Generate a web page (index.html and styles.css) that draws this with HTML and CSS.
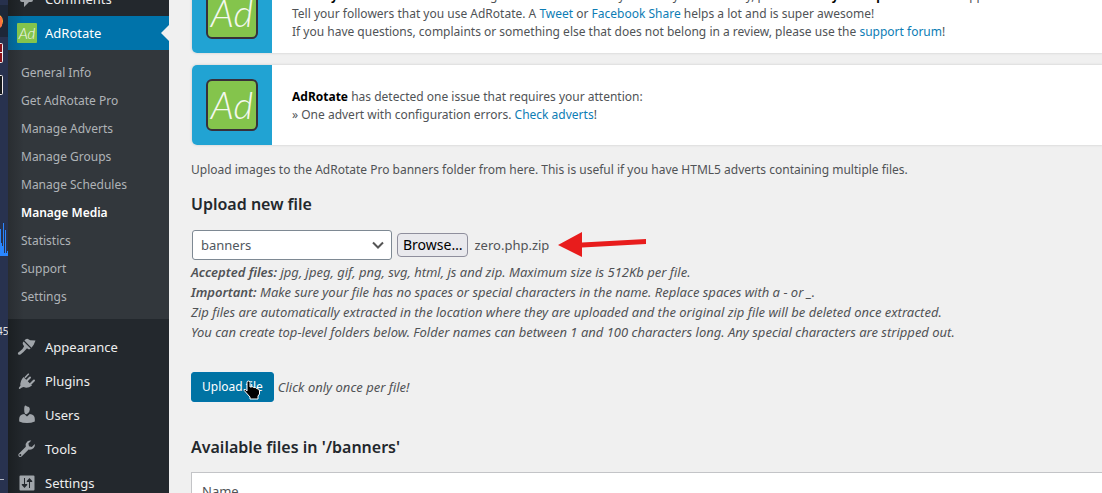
FILE: index.html
```html
<!DOCTYPE html>
<html lang="en">
<head>
<meta charset="utf-8">
<title>Manage Media</title>
<link rel="stylesheet" href="styles.css">
</head>
<body>
<div class="screen">
  <aside class="desktop" aria-hidden="true">
    <svg width="8" height="493" viewBox="0 0 8 493">
      <rect width="8" height="5" fill="#27314d"/>
      <rect y="5" width="8" height="32" fill="#1d2738"/>
      <circle cx="-4" cy="21" r="7" fill="#ffae35"/>
      <path d="M2 17v9l-2 2V17z" fill="#ff713d"/>
      <rect x="-12" y="43.500" width="14.500" height="19" rx="1" fill="#8c1118" stroke="#f4eeee"/>
      <path d="M0 52.500h2" stroke="#fff"/>
      <rect x="-12" y="75.500" width="14.500" height="19" rx="1" fill="#15181b" stroke="#f4eeee"/>
      <path d="M0 256v-27h1v14h1v3h1v-23h1v30h1v-23h1v23h1v-2h1v5z" fill="#2a86ff"/>
      <text x="-3" y="335" class="clock">45</text>
      <path d="M0 479.500h4" stroke="#b5b9c4"/>
    </svg>
  </aside>

  <nav class="menu">
    <a class="item" href="#">
      <svg class="icon" viewBox="0 0 20 20"><path d="M5 2h9q2 0 2 2v7q0 2-2 2h-2l-5 5v-5H5q-2 0-2-2V4q0-2 2-2z"/></svg>
      <span>Comments</span>
    </a>
    <a class="item current" href="#">
      <svg class="icon" viewBox="0 0 20 20"><rect width="20" height="20" rx="1" class="green"/><text x="10" y="16" class="logo-text">Ad</text></svg>
      <span>AdRotate</span>
    </a>
    <div class="submenu">
      <a href="#">General Info</a>
      <a href="#">Get AdRotate Pro</a>
      <a href="#">Manage Adverts</a>
      <a href="#">Manage Groups</a>
      <a href="#">Manage Schedules</a>
      <a href="#" class="active">Manage Media</a>
      <a href="#">Statistics</a>
      <a href="#">Support</a>
      <a href="#">Settings</a>
    </div>
    <div class="group">
      <a class="item" href="#">
        <svg class="icon" viewBox="0 0 20 20"><path d="M14.500 10.800 7.400 3.600Q9 1.300 11 2l2.200 1.200 5.300.3-1.800 4.300zM6.600 4.500l7 7q-1.500 1.500-2.600.4l-1-.7Q6.800 15 3.500 17.500 1.200 18.500.8 16.600q0-1.200 1.800-2.200Q6 12.400 7.100 9.200L6 7.500Q5 6 6.600 4.500z"/></svg>
        <span>Appearance</span>
      </a>
      <a class="item" href="#">
        <svg class="icon" viewBox="0 0 20 20"><path d="M13 6.500 9.500 10M17 9.500 13.500 13" class="line"/><path d="M12.100 3.500 8.500 7.200l-1.200-1L11 2.500q1.500-.5 1.100 1zM6.500 5.900 15 14.400q-4.500 3.500-8.200 1.700l-1.800.5-2.300 1.500q-1.200-.2-.8-1.300l1.600-2.200q-.8-4.300 3-8.700z"/></svg>
        <span>Plugins</span>
      </a>
      <a class="item" href="#">
        <svg class="icon" viewBox="0 0 20 20"><path d="M10 1.500q2.800 0 2.800 3T10 9 7.200 4.500t2.800-3zM7.200 9 10 11.500 12.800 9q5 .5 5 5v2.500q-3.500 1.500-7.800 1.500t-7.800-1.500V14q0-4.500 5-5z"/></svg>
        <span>Users</span>
      </a>
      <a class="item" href="#">
        <svg class="icon" viewBox="0 0 20 20"><path fill-rule="evenodd" d="M16.700 9.100q-2.100 2.100-5.100 1.500l-7 6.900q-1.400 1-2.700-.1-1.300-1.300-.1-2.700l7-6.900Q7.900 4.800 10.300 2.600q1.600-1.400 4-1.100L11.400 4.600l.6 2.700 2.800.7 3-3q.6 2.400-1.100 4.100zM3.300 17a1 1 0 1 0 0-2 1 1 0 0 0 0 2z"/></svg>
        <span>Tools</span>
      </a>
      <a class="item" href="#">
        <svg class="icon" viewBox="0 0 20 20"><path fill-rule="evenodd" d="M3.500 2.500h13q1 0 1 1v13q0 1-1 1h-13q-1 0-1-1v-13q0-1 1-1zM7 5v6H4.800v1L7.500 15l2.700-3v-1H8V5zM12 15V9H9.800V8l2.700-3 2.700 3v1H13v6z"/></svg>
        <span>Settings</span>
      </a>
    </div>
  </nav>

  <main class="content">
    <section class="notice">
      <div class="brand"><svg class="badge" viewBox="0 0 52 52"><rect x="1" y="1" width="50" height="50" rx="5" class="badge-box"/><text x="26" y="40" class="logo-text big">Ad</text></svg></div>
      <p><b>Already</b> a fan of AdRotate and using it to show adverts to your many visitors daily, please share <b>your experience</b> and support it!<br>
      Tell your followers that you use AdRotate. A <a href="#">Tweet</a> or <a href="#">Facebook Share</a> helps a lot and is super awesome!<br>
      If you have questions, complaints or something else that does not belong in a review, please use the <a href="#">support forum</a>!</p>
    </section>
    <section class="notice">
      <div class="brand"><svg class="badge" viewBox="0 0 52 52"><rect x="1" y="1" width="50" height="50" rx="5" class="badge-box"/><text x="26" y="40" class="logo-text big">Ad</text></svg></div>
      <p><b>AdRotate</b> has detected one issue that requires your attention:<br>
      » One advert with configuration errors. <a href="#">Check adverts</a>!</p>
    </section>

    <p class="intro">Upload images to the AdRotate Pro banners folder from here. This is useful if you have HTML5 adverts containing multiple files.</p>

    <h2>Upload new file</h2>
    <form class="upload">
      <div class="row">
        <span class="picker">
          <select aria-label="Folder"><option>banners</option></select>
          <svg class="chevron" width="12" height="8" viewBox="0 0 12 8"><path d="m1 1.500 5 5 5-5"/></svg>
        </span>
        <button type="button" class="browse">Browse…</button>
        <span class="filename">zero.php.zip</span>
        <svg class="arrow" width="90" height="26" viewBox="0 0 90 26"><path d="M0 13 24 0v10.500L88 7v5L24 15.500V25z"/></svg>
      </div>
      <p class="help"><b>Accepted files:</b> jpg, jpeg, gif, png, svg, html, js and zip. Maximum size is 512Kb per file.<br>
      <b>Important:</b> Make sure your file has no spaces or special characters in the name. Replace spaces with a - or _.<br>
      Zip files are automatically extracted in the location where they are uploaded and the original zip file will be deleted once extracted.<br>
      You can create top-level folders below. Folder names can between 1 and 100 characters long. Any special characters are stripped out.</p>
      <div class="submit">
        <button type="button" class="primary">Upload file</button>
        <svg class="pointer" width="18" height="20" viewBox="0 0 18 20"><path d="M4 2.500Q4 1 5.500 1T7 2.500V7q3-.8 4 .5 2-.2 2.500 1 3 0 3 2.500v3l-1.500 2v3H7v-2l-4.500-5Q.5 10 1 9.500q1-1 3 1.500z"/></svg>
        <em>Click only once per file!</em>
      </div>
    </form>

    <h2>Available files in '/banners'</h2>
    <table class="files"><thead><tr><th scope="col">Name</th></tr></thead></table>
  </main>
</div>
</body>
</html>
```
FILE: styles.css
```css
* { box-sizing: border-box; }

body {
  margin: 0;
  background: #f0f0f0;
  color: #505356;
  font: 12px/18px "Noto Sans", "Open Sans", sans-serif;
}

a { color: #0d7db5; text-decoration: none; }
p, h2 { margin: 0; }

.screen {
  display: grid;
  grid-template-columns: 8px 161px 1fr;
  height: 100vh;
  overflow: hidden;
}

.desktop { background: #28324f; overflow: hidden; }
.desktop svg { display: block; }
.clock { fill: #e4e4e8; font: 10px "Noto Sans", sans-serif; }

/* Admin menu */
.menu {
  background: linear-gradient(90deg, #1b1f22, #23282d 16px);
  margin-top: -18px;
}
.item {
  display: flex;
  align-items: center;
  gap: 8px;
  height: 34px;
  padding-left: 9px;
  color: #eee;
  font-size: 13px;
}
.icon { width: 20px; height: 20px; fill: #a0a5aa; flex: none; }
.line { stroke: #a0a5aa; stroke-width: 2; stroke-linecap: round; }
.item.current {
  position: relative;
  background: linear-gradient(90deg, #04628f, #0073aa 16px);
  color: #fff;
}
.item.current::after {
  content: "";
  position: absolute;
  right: 0;
  top: 9px;
  border: 8px solid transparent;
  border-right-color: #f0f0f0;
  border-left: 0;
}
.green { fill: #84c44c; }
.submenu {
  display: flex;
  flex-direction: column;
  padding: 9px 0 8px 13px;
  background: linear-gradient(90deg, #292d31, #32373c 16px);
}
.submenu a { color: #afb3b7; line-height: 28px; }
.submenu .active { color: #fff; font-weight: 600; }
.group { padding-top: 11px; }

.logo-text {
  fill: #f4f8ef;
  font: italic 300 15px "Lato", sans-serif;
  text-anchor: middle;
}
.logo-text.big { font-size: 38px; }

/* Page */
.content { padding-left: 22px; margin-top: -27px; }
.notice {
  display: flex;
  align-items: center;
  gap: 20px;
  height: 80px;
  margin: 0 0 12px 1px;
  background: #fff;
  border-radius: 5px 0 0 5px;
  box-shadow: 0 0 2px 1px #dedede;
  overflow: hidden;
  white-space: nowrap;
}
.notice p { padding-top: 2px; }
.notice b { color: #000; }
.brand {
  display: grid;
  place-items: center;
  width: 80px;
  height: 80px;
  background: #21a3d3;
  flex: none;
}
.badge { width: 52px; height: 52px; }
.badge-box { fill: #84c44c; stroke: #38303a; stroke-width: 2; }

.intro { margin: 16px 0 14px; }
h2 { color: #23282d; font-size: 16px; line-height: 22px; font-weight: 600; }

.row { display: flex; align-items: center; margin: 15px 0 2px 1px; }
.picker { display: grid; align-items: center; }
.picker > * { grid-area: 1 / 1; }
select {
  appearance: none;
  width: 200px;
  height: 30px;
  padding: 0 8px;
  border: 1px solid #7e8993;
  border-radius: 3px;
  background: #fff;
  color: #50575e;
  font: inherit;
  font-size: 13px;
}
.chevron {
  justify-self: end;
  margin-right: 8px;
  fill: none;
  stroke: #555;
  stroke-width: 2;
  pointer-events: none;
}
.browse {
  height: 24px;
  margin: 0 6px 0 5px;
  padding: 0 5px;
  border: 1px solid #8f8f9d;
  border-radius: 4px;
  background: #e9e9ed;
  color: #000;
  font: inherit;
  font-size: 14px;
}
.filename { font-size: 13px; }
.arrow { margin-left: 9px; fill: #e81c1c; }

.help { font-size: 13px; line-height: 20px; font-style: italic; }
.help b { font-weight: 600; }

.submit { position: relative; display: flex; align-items: center; gap: 4px; margin: 30px 0 34px; }
.submit em { font-size: 13px; }
.primary {
  height: 30px;
  padding: 0 10px;
  border: 1px solid #0073aa;
  border-radius: 3px;
  background: #0073a3;
  color: #fff;
  font: inherit;
}
.pointer { position: absolute; left: 52px; top: 8px; stroke: #fff; }

.files {
  width: 100%;
  margin-top: 14px;
  border: 1px solid #c3c4c7;
  border-right: 0;
  border-spacing: 0;
  background: #fff;
}
.files th { padding: 8px 10px; text-align: left; font-weight: 400; font-size: 13px; line-height: 20px; }
```
